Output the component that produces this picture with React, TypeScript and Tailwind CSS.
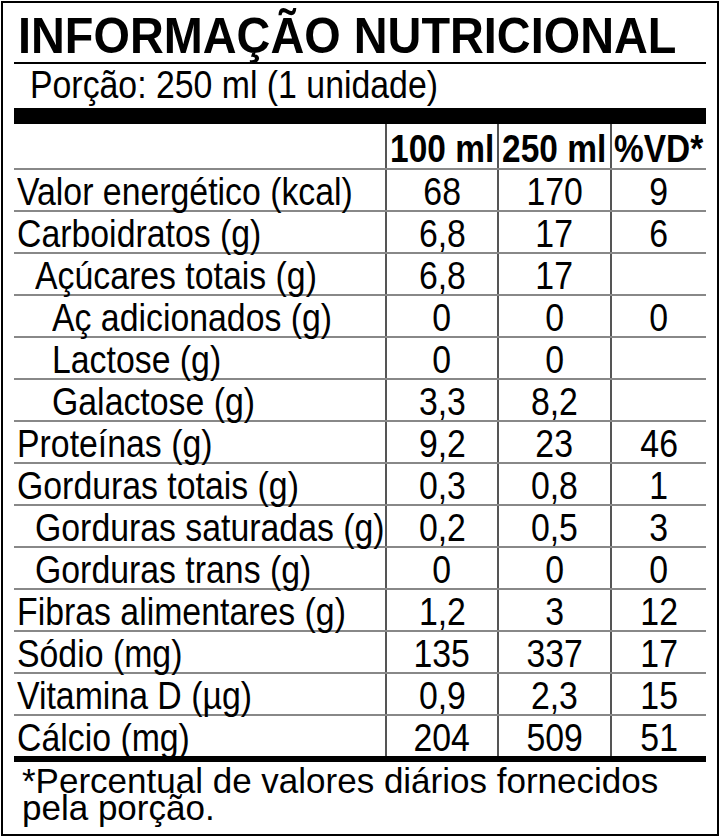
const rows = [
  { name: 'Valor energético (kcal)', level: 0, a: '68', b: '170', vd: '9' },
  { name: 'Carboidratos (g)', level: 0, a: '6,8', b: '17', vd: '6' },
  { name: 'Açúcares totais (g)', level: 1, a: '6,8', b: '17', vd: '' },
  { name: 'Aç adicionados (g)', level: 2, a: '0', b: '0', vd: '0' },
  { name: 'Lactose (g)', level: 2, a: '0', b: '0', vd: '' },
  { name: 'Galactose (g)', level: 2, a: '3,3', b: '8,2', vd: '' },
  { name: 'Proteínas (g)', level: 0, a: '9,2', b: '23', vd: '46' },
  { name: 'Gorduras totais (g)', level: 0, a: '0,3', b: '0,8', vd: '1' },
  { name: 'Gorduras saturadas (g)', level: 1, a: '0,2', b: '0,5', vd: '3' },
  { name: 'Gorduras trans (g)', level: 1, a: '0', b: '0', vd: '0' },
  { name: 'Fibras alimentares (g)', level: 0, a: '1,2', b: '3', vd: '12' },
  { name: 'Sódio (mg)', level: 0, a: '135', b: '337', vd: '17' },
  { name: 'Vitamina D (µg)', level: 0, a: '0,9', b: '2,3', vd: '15' },
  { name: 'Cálcio (mg)', level: 0, a: '204', b: '509', vd: '51' },
]

const indent = ['pl-[3px]', 'pl-[21px]', 'pl-[38px]']

// * Nutrition facts label (tabela nutricional)
export default function App() {
  return (
    <div className="min-h-screen bg-white text-black" style={{ fontFamily: '"Liberation Sans", Arial, sans-serif' }}>
      <div className="ml-px mt-px w-[718px] h-[835px] border-2 border-black px-[11px] flex flex-col">
        {/* * Title */}
        <div className="h-[61px] shrink-0 border-b-2 border-black flex items-center pl-[4px]">
          <h1 className="text-[50px] font-bold leading-none pt-[6px] whitespace-nowrap origin-left scale-x-[0.937]">INFORMAÇÃO NUTRICIONAL</h1>
        </div>

        {/* * Serving */}
        <div className="h-[44px] shrink-0 flex items-center pl-[16px] pb-[2px] text-[38px] leading-none">
          <span className="whitespace-nowrap origin-left scale-x-[0.89]">Porção: 250 ml (1 unidade)</span>
        </div>
        <div className="h-[16px] shrink-0 bg-black" />

        {/* * Header */}
        <div className="grid grid-cols-[371px_112px_113px_96px] h-[44px] shrink-0 text-[38px] font-bold leading-none">
          <div />
          <div className="border-l-2 border-[#555] flex items-center justify-center pt-[5px]">
            <span className="whitespace-nowrap scale-x-[0.88]">100 ml</span>
          </div>
          <div className="border-l-2 border-[#555] flex items-center justify-center pt-[5px]">
            <span className="whitespace-nowrap scale-x-[0.88]">250 ml</span>
          </div>
          <div className="border-l-2 border-[#555] flex items-center justify-center pt-[5px]">
            <span className="whitespace-nowrap scale-x-[0.88]">%VD*</span>
          </div>
        </div>

        {/* * Rows */}
        {rows.map((r) => (
          <div key={r.name} className="grid grid-cols-[371px_112px_113px_96px] h-[42px] shrink-0 border-t-2 border-[#888] text-[38px] leading-none">
            <div className={`flex items-center pt-[3px] ${indent[r.level]}`}>
              <span className="whitespace-nowrap origin-left scale-x-[0.89]">{r.name}</span>
            </div>
            <div className="border-l-2 border-[#555] flex items-center justify-center pt-[3px]">
              <span className="scale-x-[0.89]">{r.a}</span>
            </div>
            <div className="border-l-2 border-[#555] flex items-center justify-center pt-[3px]">
              <span className="scale-x-[0.89]">{r.b}</span>
            </div>
            <div className="border-l-2 border-[#555] flex items-center justify-center pt-[3px]">
              <span className="scale-x-[0.89]">{r.vd}</span>
            </div>
          </div>
        ))}
        <div className="h-[6px] shrink-0 bg-black" />

        {/* * Footnote */}
        <p className="pl-[8px] pt-[5px] text-[35px] leading-[27px] whitespace-nowrap">
          *Percentual de valores diários fornecidos
          <br />
          pela porção.
        </p>
      </div>
    </div>
  )
}
